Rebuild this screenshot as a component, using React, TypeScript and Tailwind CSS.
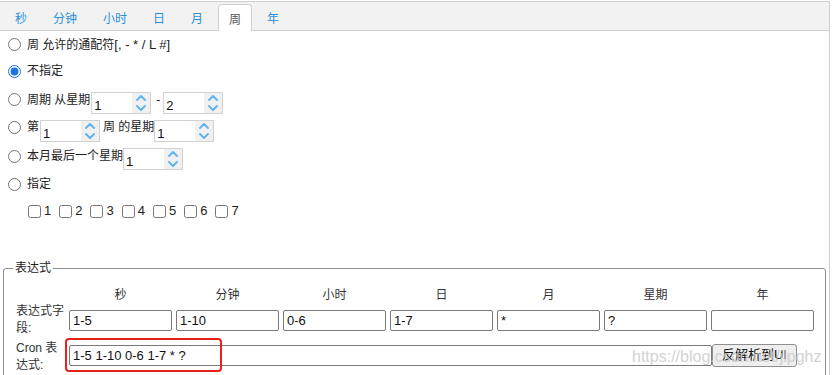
import React from 'react';

const tabs = ['秒', '分钟', '小时', '日', '月', '周', '年'];
const fields = [
    { name: '秒', value: '1-5' },
    { name: '分钟', value: '1-10' },
    { name: '小时', value: '0-6' },
    { name: '日', value: '1-7' },
    { name: '月', value: '*' },
    { name: '星期', value: '?' },
    { name: '年', value: '' },
];

const Chevron = ({ down = false }: { down?: boolean }) => (
    <svg width="10" height="6" viewBox="0 0 10 6" fill="none">
        <path
            d={down ? 'M1 1l4 4 4-4' : 'M1 5l4-4 4 4'}
            stroke="#5eb2ee"
            strokeWidth="1.8"
            strokeLinecap="round"
            strokeLinejoin="round"
        />
    </svg>
);

// number box with spin arrows
const Spinner = ({ value, className = '' }: { value: string; className?: string }) => (
    <div className={`flex h-[22px] w-[60px] border border-[#d2d2d2] bg-white ${className}`}>
        <span className="flex-1 pl-[2px] pt-[6px] text-[13px] leading-[14px] text-[#111]">{value}</span>
        <span className="flex w-[18px] flex-col items-center justify-center gap-[4px] bg-[#f0f0f0]">
            <Chevron />
            <Chevron down />
        </span>
    </div>
);

const Radio = ({ checked = false }: { checked?: boolean }) => (
    <input
        type="radio"
        name="week"
        defaultChecked={checked}
        className="ml-[8px] mr-[6px] h-[13px] w-[13px] shrink-0 accent-[#1a73e8]"
    />
);

export default function App() {
    return (
        <div className="relative h-[375px] w-[833px] overflow-hidden bg-white font-['Liberation_Sans','Noto_Sans_CJK_SC',sans-serif] text-[12px] text-[#222]">
            <div className="mt-px w-[830px] border-t border-r border-[#cfcfcf]">
                {/* tab header */}
                <div className="flex h-[29px] items-end gap-[4px] border-b border-[#cfcfcf] bg-[#f2f2f2] pl-[4px]">
                    {tabs.map((t) =>
                        t === '周' ? (
                            <div
                                key={t}
                                className="-mb-px flex h-[27px] items-center rounded-t-[4px] border border-b-0 border-[#d0d0d0] bg-white px-[10px] pt-[3px] text-[#555]"
                            >
                                {t}
                            </div>
                        ) : (
                            <div key={t} className="flex h-[26px] items-center px-[11px] pt-[3px] text-[#2b90dc]">
                                {t}
                            </div>
                        )
                    )}
                </div>

                <div className="flex flex-col">
                    <div className="flex h-[27px] items-center">
                        <Radio />
                        <span>周 允许的通配符</span>
                        <span className="text-[13px]">[, - * / L #]</span>
                    </div>
                    <div className="flex h-[26px] items-center">
                        <Radio checked />
                        <span>不指定</span>
                    </div>
                    <div className="flex h-[31px] items-center">
                        <Radio />
                        <span>周期 从星期</span>
                        <Spinner value="1" className="ml-[1px] mt-[6px]" />
                        <span className="ml-[5px] mr-[3px]">-</span>
                        <Spinner value="2" className="mt-[6px]" />
                    </div>
                    <div className="flex h-[24px] items-center">
                        <Radio />
                        <span>第</span>
                        <Spinner value="1" className="ml-px mt-[8px]" />
                        <span className="ml-[3px]">周 的星期</span>
                        <Spinner value="1" className="mt-[8px]" />
                    </div>
                    <div className="flex h-[34px] items-center">
                        <Radio />
                        <span>本月最后一个星期</span>
                        <Spinner value="1" className="mt-[6px]" />
                    </div>
                    <div className="flex h-[22px] items-center">
                        <Radio />
                        <span>指定</span>
                    </div>
                    <div className="flex h-[32px] items-center pl-[28px] text-[13px]">
                        {[1, 2, 3, 4, 5, 6, 7].map((n) => (
                            <label key={n} className="mr-[8px] flex items-center">
                                <input type="checkbox" className="mr-[3px] h-[13px] w-[13px]" />
                                <span>{n}</span>
                            </label>
                        ))}
                    </div>
                </div>

                {/* expression */}
                <fieldset className="mx-[3px] mt-[33px] mb-[20px] rounded-[3px] border border-[#8c8c8c] pl-[9px] pr-[8px] pb-[30px]">
                    <legend className="px-[2px] text-[12px] leading-[16px]">表达式</legend>
                    <div className="ml-[3px] flex flex-col">
                        <div className="flex h-[27px] pt-[11px] leading-[16px] text-[#333]">
                            <div className="w-[49px]" />
                            {fields.map((f) => (
                                <div key={f.name} className="ml-[4px] w-[103px] text-center">
                                    {f.name}
                                </div>
                            ))}
                        </div>
                        <div className="flex items-center">
                            <div className="w-[49px] leading-[17px] text-[#333]">表达式字段:</div>
                            {fields.map((f) => (
                                <input
                                    key={f.name}
                                    readOnly
                                    value={f.value}
                                    className="ml-[4px] h-[21px] w-[103px] rounded-[2px] border border-[#7a7a7a] px-[3px] text-[13px] text-[#111] outline-none"
                                />
                            ))}
                        </div>
                        <div className="mt-[3px] flex items-center">
                            <div className="w-[49px] leading-[17px] text-[#333]">Cron 表达式:</div>
                            <input
                                readOnly
                                value="1-5 1-10 0-6 1-7 * ?"
                                className="mb-[4px] ml-[4px] h-[21px] w-[643px] rounded-[2px] border border-[#7a7a7a] px-[3px] text-[13px] text-[#111] outline-none"
                            />
                            <button className="mb-[4px] h-[23px] w-[85px] rounded-[3px] border border-[#8f8f8f] bg-[#efefef] text-[13px] text-[#111]">
                                反解析到UI
                            </button>
                        </div>
                    </div>
                </fieldset>
            </div>

            {/* screenshot annotation + watermark */}
            <div className="pointer-events-none absolute left-[65px] top-[338px] h-[34px] w-[157px] rounded-[4px] border-2 border-[#e8211b]" />
            <div className="pointer-events-none absolute left-[632px] top-[347px] text-[16px] leading-[20px] text-[#c9c9c9] opacity-80">
                https://blog.csdn.net/jlpghz
            </div>
        </div>
    );
}
